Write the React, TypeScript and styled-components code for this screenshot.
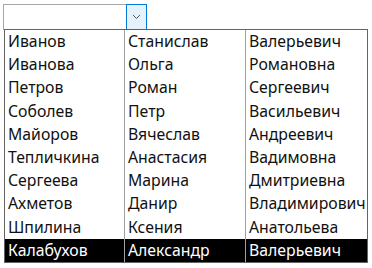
import styled, { createGlobalStyle } from "styled-components";

const people = [
  ["Иванов", "Станислав", "Валерьевич"],
  ["Иванова", "Ольга", "Романовна"],
  ["Петров", "Роман", "Сергеевич"],
  ["Соболев", "Петр", "Васильевич"],
  ["Майоров", "Вячеслав", "Андреевич"],
  ["Тепличкина", "Анастасия", "Вадимовна"],
  ["Сергеева", "Марина", "Дмитриевна"],
  ["Ахметов", "Данир", "Владимирович"],
  ["Шпилина", "Ксения", "Анатольева"],
  ["Калабухов", "Александр", "Валерьевич"],
];

const selectedIndex = 9;

const GlobalStyle = createGlobalStyle`
  body {
    margin: 0;
    background: #ffffff;
    font-family: "Noto Sans", "Open Sans", sans-serif;
  }
`;

const Page = styled.div`
  padding: 4px 0 0 3px;
  width: 372px;
  height: 268px;
  box-sizing: border-box;
`;

const Combo = styled.div`
  display: flex;
  width: 144px;
  height: 26px;
  box-sizing: border-box;
  border: 1px solid #a8a8a8;
  background: #fff;
`;

const ComboInput = styled.div`
  flex: 1;
`;

const DropButton = styled.div`
  width: 21px;
  box-sizing: border-box;
  margin: -1px -1px -1px 0;
  border: 1px solid #0078d7;
  background: #e5f1fb;
  display: flex;
  align-items: center;
  justify-content: center;
  height: 26px;
`;

const ListBox = styled.div`
  margin: -1px 0 0 1px;
  width: 364px;
  box-sizing: border-box;
  border: 1px solid #646464;
  overflow: hidden;
  background: #fff;
`;

const Row = styled.div<{ $selected?: boolean }>`
  display: grid;
  grid-template-columns: 120px 121px 140px;
  height: 23.2px;
  background: ${({ $selected }) => ($selected ? "#000" : "#fff")};
  color: ${({ $selected }) => ($selected ? "#fff" : "#111")};
`;

const Cell = styled.div`
  padding-left: 3px;
  font-size: 15.8px;
  line-height: 23px;
  white-space: nowrap;
  overflow: hidden;
  border-right: 1px solid #a0a0a0;
  &:last-child {
    border-right: none;
  }
`;

const Chevron = () => (
  <svg width="9" height="6" viewBox="0 0 9 6">
    <path d="M1 1l3.5 3.5L8 1" fill="none" stroke="#555" strokeWidth="1" />
  </svg>
);

const App = () => {
  return (
    <Page>
      <GlobalStyle />
      <Combo>
        <ComboInput />
        <DropButton>
          <Chevron />
        </DropButton>
      </Combo>
      <ListBox>
        {people.map((p, i) => (
          <Row key={i} $selected={i === selectedIndex}>
            {p.map((name, j) => (
              <Cell key={j}>{name}</Cell>
            ))}
          </Row>
        ))}
      </ListBox>
    </Page>
  );
};

export default App;
